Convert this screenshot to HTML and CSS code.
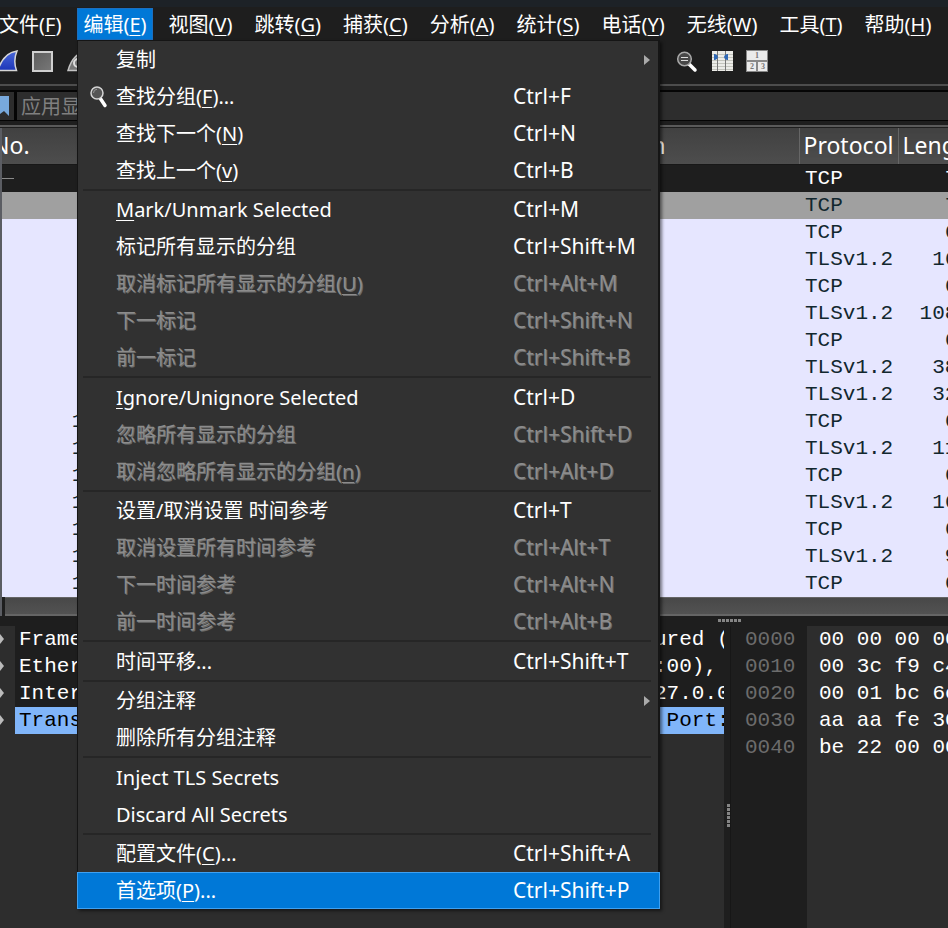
FILE: index.html
```html
<!DOCTYPE html>
<html lang="zh-CN">
<head>
<meta charset="utf-8">
<title>Wireshark</title>
<link rel="stylesheet" href="styles.css">
</head>
<body>
<div class="app">
  <nav class="menubar">
    <button>文件(<u>F</u>)</button>
    <button class="open">编辑(<u>E</u>)</button>
    <button>视图(<u>V</u>)</button>
    <button>跳转(<u>G</u>)</button>
    <button>捕获(<u>C</u>)</button>
    <button>分析(<u>A</u>)</button>
    <button>统计(<u>S</u>)</button>
    <button>电话(<u>Y</u>)</button>
    <button>无线(<u>W</u>)</button>
    <button>工具(<u>T</u>)</button>
    <button>帮助(<u>H</u>)</button>
  </nav>

  <div class="toolbar">
    <div class="tools">
      <button aria-label="开始捕获"><svg width="22" height="24" viewBox="0 0 22 24"><defs><linearGradient id="fin" x1="0" y1="0" x2="0" y2="1"><stop offset="0" stop-color="#4a68d8"/><stop offset="1" stop-color="#1c35b8"/></linearGradient></defs><path d="M1 21.500C4 11 9 3.500 20 2C17 9 17.500 16 19.500 21.500Z" fill="url(#fin)" stroke="#d6d6d6" stroke-width="1.500"/></svg></button>
      <button aria-label="停止捕获"><svg width="22" height="24" viewBox="0 0 22 24"><defs><linearGradient id="stop" x1="0" y1="0" x2="1" y2="1"><stop offset="0" stop-color="#5c5c5c"/><stop offset="1" stop-color="#787878"/></linearGradient></defs><rect x="1" y="3" width="19" height="19" fill="url(#stop)" stroke="#cfcfcf" stroke-width="2"/></svg></button>
      <button aria-label="重新开始"><svg width="22" height="24" viewBox="0 0 22 24"><path d="M1 21.500C4 11 9 3.500 20 2C17 9 17.500 16 19.500 21.500Z" fill="#777" stroke="#c4c4c4" stroke-width="1.500"/><circle cx="11" cy="14" r="4" fill="none" stroke="#ddd" stroke-width="2"/></svg></button>
    </div>
    <div class="tools">
      <button aria-label="普通大小"><svg width="22" height="24" viewBox="0 0 22 24"><path d="M13 15L19 21" stroke="#fff" stroke-width="3.500" stroke-linecap="round"/><circle cx="8.500" cy="10" r="6.800" fill="#484848" stroke="#aaa" stroke-width="1.500"/><path d="M5 8.500h7M5 11.500h7" stroke="#ddd" stroke-width="1.200"/></svg></button>
      <button aria-label="调整列宽"><svg width="22" height="24" viewBox="0 0 22 24"><rect x="1" y="2" width="21" height="20" fill="#ecece8"/><path d="M1 5.500h21M1 8.500h21M1 11.500h21M1 14.500h21M1 17.500h21M1 20.500h21" stroke="#c4c5bd"/><path d="M6.500 2v20M14.500 2v20" stroke="#777"/><path d="M3 5h1q3 1 3 3t-3 3h-1zM17 5h-1q-3 1-3 3t3 3h1z" fill="#2f68b5"/></svg></button>
      <button aria-label="布局"><svg width="22" height="24" viewBox="0 0 22 24"><rect x="0" y="1" width="22" height="22" fill="#888"/><path d="M1 2h20v9H1zM1 13h9v9H1zM12 13h9v9h-9z" fill="#ebebeb"/><text x="11" y="9" class="cell-number">1</text><text x="6" y="20" class="cell-number">2</text><text x="17" y="20" class="cell-number">3</text></svg></button>
    </div>
  </div>

  <div class="filterbar">
    <button class="bookmark" aria-label="书签"><svg width="9" height="20" viewBox="0 0 9 20"><path d="M0 0h9v20L4 15L0 18Z" fill="#78a9dc"/></svg></button>
    <input type="text" aria-label="显示过滤器" placeholder="应用显示过滤器">
  </div>

  <div class="packets">
    <table>
      <colgroup><col class="c-no"><col><col class="c-dest"><col class="c-proto"><col class="c-len"></colgroup>
      <thead><tr><th>No.</th><th></th><th class="dest">Destination</th><th>Protocol</th><th>Length</th></tr></thead>
      <tbody>
        <tr class="dark"><td>1</td><td></td><td></td><td>TCP</td><td>74</td></tr>
        <tr class="selected"><td>2</td><td></td><td></td><td>TCP</td><td>74</td></tr>
        <tr><td>3</td><td></td><td></td><td>TCP</td><td>66</td></tr>
        <tr><td>4</td><td></td><td></td><td>TLSv1.2</td><td>163</td></tr>
        <tr><td>5</td><td></td><td></td><td>TCP</td><td>66</td></tr>
        <tr><td>6</td><td></td><td></td><td>TLSv1.2</td><td>1083</td></tr>
        <tr><td>7</td><td></td><td></td><td>TCP</td><td>66</td></tr>
        <tr><td>8</td><td></td><td></td><td>TLSv1.2</td><td>380</td></tr>
        <tr><td>9</td><td></td><td></td><td>TLSv1.2</td><td>324</td></tr>
        <tr><td>10</td><td></td><td></td><td>TCP</td><td>66</td></tr>
        <tr><td>11</td><td></td><td></td><td>TLSv1.2</td><td>117</td></tr>
        <tr><td>12</td><td></td><td></td><td>TCP</td><td>66</td></tr>
        <tr><td>13</td><td></td><td></td><td>TLSv1.2</td><td>164</td></tr>
        <tr><td>14</td><td></td><td></td><td>TCP</td><td>66</td></tr>
        <tr><td>15</td><td></td><td></td><td>TLSv1.2</td><td>97</td></tr>
        <tr><td>16</td><td></td><td></td><td>TCP</td><td>66</td></tr>
      </tbody>
    </table>
    <div class="scrollbar"></div>
  </div>

  <div class="splitter"><i class="grip"></i></div>

  <div class="lower">
    <div class="details">
      <div class="detail"><i class="arrow"></i><div class="line"><span>Frame</span><span class="tail">ured (</span></div></div>
      <div class="detail"><i class="arrow"></i><div class="line"><span>Ether</span><span class="tail">:00), </span></div></div>
      <div class="detail"><i class="arrow"></i><div class="line"><span>Inter</span><span class="tail">27.0.0</span></div></div>
      <div class="detail current"><i class="arrow"></i><div class="line"><span>Trans</span><span class="tail"> Port:</span></div></div>
    </div>
    <div class="splitter vertical"><i class="grip"></i></div>
    <pre class="offsets">0000
0010
0020
0030
0040</pre>
    <pre class="bytes">00 00 00 00
00 3c f9 c4
00 01 bc 6e
aa aa fe 30
be 22 00 00</pre>
  </div>

  <div class="menu" role="menu">
    <button class="sub"><span>复制</span></button>
    <button><svg class="find" width="20" height="24" viewBox="0 0 20 24"><path d="M11 13L16 20.500" stroke="#fff" stroke-width="3.500" stroke-linecap="round"/><circle cx="8" cy="8" r="6" fill="#555" stroke="#d5d5d5" stroke-width="1.500"/><path d="M4.500 8q0-3.500 3.500-3.800" fill="none" stroke="#999"/></svg><span>查找分组(<u>F</u>)...</span><kbd>Ctrl+F</kbd></button>
    <button><span>查找下一个(<u>N</u>)</span><kbd>Ctrl+N</kbd></button>
    <button><span>查找上一个(<u>v</u>)</span><kbd>Ctrl+B</kbd></button>
    <hr>
    <button><span><u>M</u>ark/Unmark Selected</span><kbd>Ctrl+M</kbd></button>
    <button><span>标记所有显示的分组</span><kbd>Ctrl+Shift+M</kbd></button>
    <button disabled><span>取消标记所有显示的分组(<u>U</u>)</span><kbd>Ctrl+Alt+M</kbd></button>
    <button disabled><span>下一标记</span><kbd>Ctrl+Shift+N</kbd></button>
    <button disabled><span>前一标记</span><kbd>Ctrl+Shift+B</kbd></button>
    <hr>
    <button><span><u>I</u>gnore/Unignore Selected</span><kbd>Ctrl+D</kbd></button>
    <button disabled><span>忽略所有显示的分组</span><kbd>Ctrl+Shift+D</kbd></button>
    <button disabled><span>取消忽略所有显示的分组(<u>n</u>)</span><kbd>Ctrl+Alt+D</kbd></button>
    <hr>
    <button><span>设置/取消设置 时间参考</span><kbd>Ctrl+T</kbd></button>
    <button disabled><span>取消设置所有时间参考</span><kbd>Ctrl+Alt+T</kbd></button>
    <button disabled><span>下一时间参考</span><kbd>Ctrl+Alt+N</kbd></button>
    <button disabled><span>前一时间参考</span><kbd>Ctrl+Alt+B</kbd></button>
    <hr>
    <button><span>时间平移...</span><kbd>Ctrl+Shift+T</kbd></button>
    <hr>
    <button class="sub"><span>分组注释</span></button>
    <button><span>删除所有分组注释</span></button>
    <hr>
    <button><span>Inject TLS Secrets</span></button>
    <button><span>Discard All Secrets</span></button>
    <hr>
    <button><span>配置文件(<u>C</u>)...</span><kbd>Ctrl+Shift+A</kbd></button>
    <button class="active"><span>首选项(<u>P</u>)...</span><kbd>Ctrl+Shift+P</kbd></button>
  </div>
</div>
</body>
</html>
```
FILE: styles.css
```css
* { box-sizing: border-box; }

body {
  margin: 0;
  background: #1e1e1e;
  color: #fff;
  font: 20px/27px "Noto Sans", "Noto Sans CJK SC", sans-serif;
}

button {
  margin: 0;
  padding: 0;
  border: 0;
  background: none;
  color: inherit;
  font: inherit;
  text-align: left;
  white-space: nowrap;
}

u {
  text-underline-offset: 3px;
  text-decoration-thickness: 1px;
  text-decoration-skip-ink: none;
}

.app {
  position: relative;
  display: flex;
  flex-direction: column;
  height: 100vh;
  min-height: 760px;
  overflow: hidden;
}

/* Menu bar */
.menubar {
  display: flex;
  flex: none;
  gap: 10px;
  height: 40px;
  margin-left: -7px;
  padding-top: 1px;
  border-top: 7px solid #1d2227;
}
.menubar button { padding: 0 6px; height: 32px; }
.menubar .open { background: #0078d7; border: 1px solid #1c6fc0; padding: 0 5px; }

/* Toolbar */
.toolbar {
  display: flex;
  flex: none;
  justify-content: space-between;
  height: 46px;
  padding: 9px 180px 0 0;
  border-bottom: 2px solid #4d4d4d;
}
.tools { display: flex; gap: 13px; margin-left: -3px; }
.tools button { height: 24px; width: 22px; }
.tools svg { display: block; }
.cell-number { font: bold 8px "Liberation Serif", serif; fill: #777; text-anchor: middle; }

/* Filter bar */
.filterbar {
  display: flex;
  flex: none;
  height: 41px;
  padding-top: 4px;
  border-bottom: 2px solid #5a5a5a;
}
.bookmark {
  display: flex;
  align-items: center;
  width: 15px;
  height: 31px;
  background: #2d2d2d;
  border: solid #050505;
  border-width: 2px 1px 1px 0;
}
.filterbar input {
  flex: 1;
  min-width: 0;
  height: 31px;
  padding: 0 4px;
  border: solid #050505;
  border-width: 2px 0 1px 2px;
  background: #2d2d2d;
  color: #fff;
  font: inherit;
}
.filterbar input::placeholder { color: #808080; opacity: 1; }

/* Packet list */
.packets { flex: none; border-left: 2px solid #5b5d63; overflow: hidden; margin-top: 1px; }
table {
  width: calc(100% + 24px);
  border-collapse: collapse;
  table-layout: fixed;
}
.c-no { width: 95px; }
.c-dest { width: 262px; }
.c-proto { width: 99px; }
.c-len { width: 74px; }
th {
  height: 36px;
  padding: 0 0 0 4px;
  background: linear-gradient(#414141, #4d4d4d);
  border-bottom: 1px solid #181818;
  font-size: 23px;
  font-weight: 400;
  text-align: left;
}
th:nth-child(n+4) { border-left: 1px solid #666; }
th:first-child { padding: 0; text-indent: -10px; }
td {
  height: 27px;
  padding: 0 0 0 6px;
  background: #e6e6ff;
  color: #12272e;
  font: 21px/27px "Liberation Mono", monospace;
}
td:first-child, td:last-child { padding: 0 2px 0 0; text-align: right; }
td:first-child { padding: 0; }
.dark td { background: #1e1e1e; color: #fff; }
.dark td:first-child {
  background: linear-gradient(#8a8a8a, #8a8a8a) 0 13px / 12px 1px no-repeat #1e1e1e;
}
.selected td { background: #a0a0a0; }
.scrollbar {
  height: 19px;
  margin-left: 3px;
  background: linear-gradient(#484848, #525252);
  border: solid #656565;
  border-width: 1px 0 2px;
}

/* Splitters */
.splitter { display: flex; flex: none; align-items: center; justify-content: center; height: 10px; }
.grip {
  width: 24px;
  height: 3px;
  margin-left: 512px;
  background: repeating-linear-gradient(90deg, #858585 0 3px, #1e1e1e 3px 4px);
}
.splitter.vertical { justify-content: flex-end; width: 7px; height: auto; border-right: 1px solid #171717; }
.vertical .grip {
  width: 3px;
  height: 24px;
  margin: 78px 0 0;
  background: repeating-linear-gradient(#858585 0 3px, #1e1e1e 3px 4px);
}

/* Lower panes */
.lower {
  display: flex;
  flex: 1;
  min-height: 0;
  overflow: hidden;
  font: 21px/27px "Liberation Mono", monospace;
}
.details { flex: 1; min-width: 0; background: #2d2d2d; }
.detail { display: flex; align-items: center; height: 27px; }
.arrow {
  width: 4px;
  margin-right: 11px;
  border: 5px solid transparent;
  border-right: 0;
  border-left: 4px solid #bbb;
}
.line {
  display: flex;
  flex: 1;
  justify-content: space-between;
  background: #1e1e1e;
  padding-left: 4px;
  white-space: pre;
}
.tail { width: 70px; overflow: hidden; }
.current .line { background: #80b5f9; color: #000; }
pre { margin: 0; font: inherit; }
.offsets { width: 76px; padding-left: 14px; color: #6c6c6c; background: #1e1e1e; }
.bytes { width: 141px; padding-left: 12px; background: #2d2d2d; overflow: hidden; }

/* Edit menu */
.menu {
  position: absolute;
  top: 40px;
  bottom: 19px;
  left: 77px;
  display: flex;
  flex-direction: column;
  width: 583px;
  max-height: 874px;
  background: #313131;
  border: 1px solid #151515;
  border-right-width: 2px;
  border-bottom: 0;
  box-shadow: 2px 2px 3px rgba(0, 0, 0, .5);
}
.menu button {
  position: relative;
  display: grid;
  grid-template-columns: 397px 1fr;
  flex: none;
  align-items: center;
  height: 37px;
  padding-left: 38px;
}
.menu kbd { font: 21px/27px "Noto Sans", sans-serif; }
.menu button:disabled { color: #8c8c8c; text-shadow: 1px 1px 0 #6a6a6a; }
.menu hr {
  flex: 0 1 3px;
  width: 568px;
  margin: 0 5px;
  border: 0;
  border-top: 2px solid #262626;
}
.menu .active { background: #0078d7; margin: 0 -2px 0 -1px; border: 1px solid #3fa0f0; }
.find { position: absolute; left: 11px; top: 7px; }
.sub::after {
  justify-self: end;
  margin-right: 8px;
  border: 5px solid transparent;
  border-right: 0;
  border-left: 6px solid #aaa;
  content: "";
}
```
